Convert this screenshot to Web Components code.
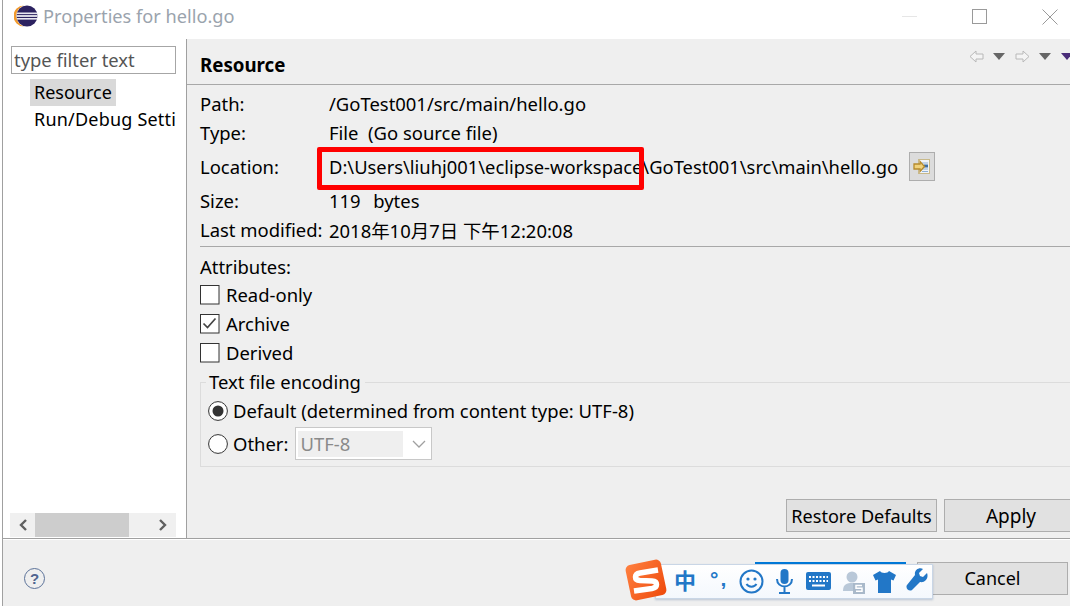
<!DOCTYPE html>
<html lang="en">
<head>
<meta charset="utf-8">
<title>Properties for hello.go</title>
<style>
  html, body { margin: 0; padding: 0; background: #fff; }
  body {
    width: 1070px;
    height: 606px;
    overflow: hidden;
    font-family: "Noto Sans", "Noto Sans CJK SC", sans-serif;
    font-size: 18px;
    color: #000;
  }
</style>
</head>
<body>
<properties-dialog>
  <dialog-titlebar slot="title">Properties for hello.go</dialog-titlebar>
  <pref-sidebar slot="side"></pref-sidebar>
  <resource-page slot="page"></resource-page>
  <dialog-footer slot="footer"></dialog-footer>
</properties-dialog>
<ime-toolbar></ime-toolbar>

<script>
function shadow(el, html) {
  el.attachShadow({ mode: "open" }).innerHTML = html;
}

class PropertiesDialog extends HTMLElement {
  connectedCallback() {
    shadow(this, `
      <style>
        :host { display: flex; flex-direction: column; width: 1067px; height: 606px; margin-left: 2px; border-left: 1px solid #a0a0a0; overflow: hidden; }
        .main { display: flex; height: 499px; border-bottom: 1px solid #a0a0a0; }
        .side { width: 183px; flex: none; background: #fff; border-right: 1px solid #a0a0a0; }
        .page { flex: 1; min-width: 0; background: #efefef; }
        .foot { flex: 1; background: #efefef; border-top: 1px solid #fff; }
      </style>
      <slot name="title"></slot>
      <div class="main">
        <div class="side"><slot name="side"></slot></div>
        <div class="page"><slot name="page"></slot></div>
      </div>
      <div class="foot"><slot name="footer"></slot></div>
    `);
  }
}

class DialogTitlebar extends HTMLElement {
  connectedCallback() {
    shadow(this, `
      <style>
        :host { display: flex; align-items: center; height: 39px; flex: none; background: #fff; padding-left: 11px; }
        svg { display: block; flex: none; }
        .name { margin-left: 5px; color: #9aa3ad; font-size: 18.2px; flex: 1; position: relative; top: -4px; }
        .logo { position: relative; top: -4px; }
        .btns { display: flex; align-items: center; position: relative; top: -3px; }
      </style>
      <svg class="logo" width="24" height="22" viewBox="0 0 24 22">
        <path d="M10 0.5A10.5 10.5 0 0 0 10 21.5A11 11 0 0 1 10 0.5Z" fill="#f29b2e"/>
        <circle cx="13" cy="11" r="10.5" fill="#2c2260"/>
        <rect x="3" y="7.5" width="20" height="1.6" fill="#e8e6f0"/>
        <rect x="2.5" y="10.2" width="21" height="1.6" fill="#fff"/>
        <rect x="3" y="13" width="20" height="1.6" fill="#e8e6f0"/>
      </svg>
      <span class="name"><slot></slot></span>
      <div class="btns">
        <svg width="15" height="2" viewBox="0 0 15 2" style="margin-right:55px"><rect width="15" height="1" fill="#e6e6e6"/></svg>
        <svg width="15" height="15" viewBox="0 0 15 15" style="margin-right:55px"><rect x=".5" y=".5" width="14" height="14" fill="none" stroke="#9a9a9a"/></svg>
        <svg width="16" height="16" viewBox="0 0 16 16" style="margin-right:12px"><path d="M.5.5l15 15M15.5.5l-15 15" fill="none" stroke="#9a9a9a"/></svg>
      </div>
    `);
  }
}

class PrefSidebar extends HTMLElement {
  connectedCallback() {
    shadow(this, `
      <style>
        :host { display: flex; flex-direction: column; height: 100%; padding: 7px 10px 1px 8px; box-sizing: border-box; }
        input { box-sizing: border-box; width: 165px; height: 28px; border: 1px solid #a6a6a6; padding: 0 2px 2px; margin: 0; font: inherit; font-size: 18.4px; flex: none; outline: none; background: #fff; }
        input::placeholder { color: #555; opacity: 1; }
        .tree { flex: 1; margin-top: 5px; width: 165px; overflow: hidden; white-space: nowrap; padding-left: 19px; box-sizing: border-box; }
        .item { height: 27px; line-height: 26px; }
        .item span { display: inline-block; height: 27px; padding: 0 4px 0 4px; margin-right: -60px; }
        .sel span { background: #d9d9d9; }
        .run { letter-spacing: .2px; }
        .scroll { display: flex; align-items: center; flex: none; width: 166px; height: 24px; margin-left: -1px; background: #f0f0f0; }
        .thumb { width: 94px; height: 24px; background: #cdcdcd; margin: 0 auto 0 7px; }
        svg { display: block; flex: none; }
      </style>
      <input type="text" placeholder="type filter text">
      <div class="tree">
        <div class="item sel"><span>Resource</span></div>
        <div class="item run"><span>Run/Debug Settings</span></div>
      </div>
      <div class="scroll">
        <svg style="margin-left:8px" width="10" height="12" viewBox="0 0 10 12"><path d="M8 1L3 6l5 5" fill="none" stroke="#606060" stroke-width="2.4"/></svg>
        <div class="thumb"></div>
        <svg style="margin-right:8px" width="10" height="12" viewBox="0 0 10 12"><path d="M2 1l5 5-5 5" fill="none" stroke="#606060" stroke-width="2.4"/></svg>
      </div>
    `);
  }
}

class InfoRow extends HTMLElement {
  connectedCallback() {
    shadow(this, `
      <style>
        :host { display: flex; align-items: center; white-space: nowrap; }
        .label { width: 129px; flex: none; }
      </style>
      <span class="label">${this.getAttribute("label")}</span><slot></slot>
    `);
  }
}

class CheckRow extends HTMLElement {
  connectedCallback() {
    const mark = this.hasAttribute("checked")
      ? '<path d="M3.5 9.5l4 4 8-9" fill="none" stroke="#444" stroke-width="1.7"/>' : "";
    shadow(this, `
      <style>
        :host { display: flex; align-items: center; height: 29px; gap: 6px; }
        svg { display: block; flex: none; }
      </style>
      <svg width="20" height="20" viewBox="0 0 20 20"><rect x=".5" y=".5" width="18.5" height="18.5" fill="#fff" stroke="#333"/>${mark}</svg>
      <slot></slot>
    `);
  }
}

class RadioRow extends HTMLElement {
  connectedCallback() {
    const dot = this.hasAttribute("checked") ? '<circle cx="10" cy="10" r="5.5" fill="#333"/>' : "";
    shadow(this, `
      <style>
        :host { display: flex; align-items: center; gap: 5px; }
        svg { display: block; flex: none; }
      </style>
      <svg width="20" height="20" viewBox="0 0 20 20"><circle cx="10" cy="10" r="9.4" fill="#fff" stroke="#333"/>${dot}</svg>
      <slot></slot>
    `);
  }
}

class PushButton extends HTMLElement {
  connectedCallback() {
    shadow(this, `
      <style>
        :host { display: flex; align-items: center; justify-content: center; box-sizing: border-box; height: 33px; background: #e1e1e1; border: 1px solid #adadad; white-space: nowrap; flex: none; }
      </style>
      <slot></slot>
    `);
  }
}

class ResourcePage extends HTMLElement {
  connectedCallback() {
    shadow(this, `
      <style>
        :host { display: flex; flex-direction: column; height: 100%; overflow: hidden; font-size: 18.45px; }
        .head { display: flex; align-items: center; height: 46px; flex: none; box-sizing: border-box; padding: 6px 0 0 13px; border-bottom: 1px solid #a8a8a8; }
        .head b { font-size: 18.7px; font-weight: 700; flex: 1; }
        .nav { display: flex; align-items: center; position: relative; top: -8px; width: 101px; }
        .nav svg { display: block; flex: none; }
        .body { flex: 1; padding: 4px 0 0 13px; display: flex; flex-direction: column; min-height: 0; }
        .r1 { height: 29px; }
        .r2 { height: 38px; }
        .r3 { height: 30px; word-spacing: 1.5px; }
        .loc { flex: none; font-size: 18.35px; }
        .browse { width: 26px; height: 29px; margin-left: 11px; background: #dcdcdc; }
        .sep { height: 1px; background: #a8a8a8; margin-top: 2px; flex: none; }
        .attrs { height: 33px; line-height: 40px; flex: none; }
        fieldset { margin: 3px 0 0; padding: 0 0 0 7px; border: 1px solid #dcdcdc; border-right: 0; height: 97px; box-sizing: border-box; flex: none; }
        legend { padding: 0 4px 0 3px; margin-left: -2px; line-height: 24px; }
        radio-row { height: 33px; }
        .combo { display: flex; align-items: center; box-sizing: border-box; width: 137px; height: 33px; margin-left: 2px; background: #fff; border: 1px solid #c8c8c8; padding: 2px; }
        .combo span { display: block; width: 105px; height: 26px; line-height: 25px; background: #efefef; color: #8a8a8a; padding-left: 2px; box-sizing: border-box; }
        .combo svg { margin-left: 9px; display: block; }
        .actions { display: flex; justify-content: flex-end; gap: 7px; margin-top: auto; margin-right: -8px; padding-bottom: 6px; font-size: 18.1px; }
      </style>
      <div class="head">
        <b>Resource</b>
        <div class="nav">
          <svg width="15" height="13" viewBox="0 0 15 13"><path d="M14 4H7V1L1 6.5 7 12V9h7z" fill="#f4f4f4" stroke="#b8b8b8"/></svg>
          <svg style="margin-left:9px" width="12" height="7" viewBox="0 0 12 7"><path d="M0 0h12L6 7z" fill="#666"/></svg>
          <svg style="margin-left:10px" width="15" height="13" viewBox="0 0 15 13"><path d="M1 4h7V1l6 5.500L8 12V9H1z" fill="#f4f4f4" stroke="#b8b8b8"/></svg>
          <svg style="margin-left:9px" width="12" height="7" viewBox="0 0 12 7"><path d="M0 0h12L6 7z" fill="#666"/></svg>
          <svg style="margin-left:10px" width="12" height="7" viewBox="0 0 12 7"><path d="M0 0h12L6 7z" fill="#4a2d7a"/></svg>
        </div>
      </div>
      <div class="body">
        <info-row class="r1" label="Path:">/GoTest001/src/main/hello.go</info-row>
        <info-row class="r1" label="Type:">File&nbsp; (Go source file)</info-row>
        <info-row class="r2" label="Location:">
          <span class="loc">D:\\Users\\liuhj001\\eclipse-workspace\\GoTest001\\src\\main\\hello.go</span>
          <push-button class="browse">
            <svg width="18" height="17" viewBox="0 0 18 17"><rect x="5.500" y="1.500" width="11" height="14" fill="#f1f4f8" stroke="#c8b98a"/><path d="M9 5h6M11 8h4M9 11h6M9 13.500h6" stroke="#8fb0d4"/><rect x="11" y="6.500" width="4" height="3" fill="#3d6fa5"/><path d="M1 6h6V3.500L11.500 8.500 7 13.500V11H1z" fill="#f0d27c" stroke="#b58a2c" stroke-width="1.300"/></svg>
          </push-button>
        </info-row>
        <info-row class="r3" label="Size:">119&nbsp; bytes</info-row>
        <info-row class="r1" label="Last modified:">2018年10月7日 下午12:20:08</info-row>
        <div class="sep"></div>
        <div class="attrs">Attributes:</div>
        <check-row>Read-only</check-row>
        <check-row checked>Archive</check-row>
        <check-row>Derived</check-row>
        <fieldset>
          <legend>Text file encoding</legend>
          <radio-row checked>Default (determined from content type: UTF-8)</radio-row>
          <radio-row>Other:
            <div class="combo"><span>UTF-8</span><svg width="14" height="8" viewBox="0 0 14 8"><path d="M1 1l6 6 6-6" fill="none" stroke="#a0a0a0" stroke-width="1.300"/></svg></div>
          </radio-row>
        </fieldset>
        <div class="actions">
          <push-button style="width:151px">Restore Defaults</push-button>
          <push-button style="width:134px;font-size:19px">Apply</push-button>
        </div>
      </div>
      <red-mark></red-mark>
    `);
  }
}

// reviewer's red box drawn over the location path
class RedMark extends HTMLElement {
  connectedCallback() {
    shadow(this, `
      <style>
        :host { position: absolute; left: 317px; top: 147px; width: 327px; height: 43px; box-sizing: border-box; border: 5px solid #f00; border-radius: 2px; }
      </style>
    `);
  }
}

class DialogFooter extends HTMLElement {
  connectedCallback() {
    shadow(this, `
      <style>
        :host { display: flex; align-items: center; height: 66px; box-sizing: border-box; padding: 10px 2px 0 21px; }
        .help { display: flex; align-items: center; justify-content: center; box-sizing: border-box; width: 21px; height: 21px; border: 1.500px solid #5b7299; border-radius: 50%; color: #4f6590; font: 700 15px "Liberation Sans", sans-serif; }
        .ok { width: 151px; height: 33px; box-sizing: border-box; border-top: 2px solid #0078d7; margin-left: auto; margin-right: 11px; }
        push-button { width: 151px; }
      </style>
      <div class="help">?</div>
      <div class="ok"></div>
      <push-button>Cancel</push-button>
    `);
  }
}

// sogou input method bar floats above the dialog
class ImeToolbar extends HTMLElement {
  connectedCallback() {
    shadow(this, `
      <style>
        :host { position: absolute; left: 625px; top: 559px; width: 308px; height: 42px; }
        .bar { position: absolute; left: 30px; right: 0; top: 5px; height: 35px; box-sizing: border-box; background: linear-gradient(#fff, #f4f8fd); border: 1px solid #c9d6e6; box-shadow: 0 1px 2px rgba(90,120,160,.35); color: #2277c7; }
        .logo { left: 0; top: 0; overflow: visible; }
        .zh { position: absolute; left: 18px; top: 0; font: 700 22px/28px "Noto Sans CJK SC", sans-serif; }
        .pt { position: absolute; left: 54px; top: 0; font: 700 21px/28px "Liberation Sans", sans-serif; letter-spacing: 2px; }
        svg { position: absolute; display: block; }
      </style>
      <div class="bar">
        <span class="zh">中</span>
        <span class="pt">°,</span>
        <svg style="left:83px;top:4px" width="25" height="25" viewBox="0 0 25 25"><circle cx="12.500" cy="12.500" r="11" fill="none" stroke="#2277c7" stroke-width="2"/><circle cx="9" cy="10" r="1.600" fill="#2277c7"/><circle cx="16" cy="10" r="1.600" fill="#2277c7"/><path d="M7.500 15c2 3.500 8 3.500 10 0" fill="none" stroke="#2277c7" stroke-width="2"/></svg>
        <svg style="left:119px;top:4px" width="19" height="25" viewBox="0 0 19 25"><rect x="5.500" y="0" width="8" height="15" rx="4" fill="#2277c7"/><path d="M2 10c0 10 15 10 15 0M9.500 18v5M4 24h11" fill="none" stroke="#2277c7" stroke-width="2"/></svg>
        <svg style="left:150px;top:7px" width="25" height="18" viewBox="0 0 25 18"><rect width="25" height="18" rx="2" fill="#2277c7"/><path d="M3 5h19M3 9h19" stroke="#fff" stroke-width="2" stroke-dasharray="2 1.500"/><path d="M6 13.500h13" stroke="#fff" stroke-width="2"/></svg>
        <svg style="left:186px;top:6px" width="24" height="23" viewBox="0 0 24 23"><circle cx="10" cy="6" r="5.500" fill="#b9c8d8"/><path d="M1 20c0-7 4-8 9-8s8 1 9 6v2z" fill="#b9c8d8"/><rect x="11" y="12" width="12" height="11" fill="#a9b9ca"/><path d="M20 14.500h-6v2.700h6v3h-6" fill="none" stroke="#fff" stroke-width="1.500"/></svg>
        <svg style="left:217px;top:6px" width="23" height="22" viewBox="0 0 23 22"><path d="M7 0c1 2.500 8 2.500 9 0l7 4-2.500 5.500L18 8.500V22H5V8.500L2.500 9.500 0 4z" fill="#2277c7"/></svg>
        <svg style="left:250px;top:3px" width="22" height="23" viewBox="0 0 22 23"><path d="M21 5l-4 4-3-1-1-3 4-4c-4-2-9 1-8 6L1 17c-2 3 2 7 5 5l8-8c5 1 9-4 7-9z" fill="#2277c7"/></svg>
      </div>
      <svg class="logo" width="42" height="42" viewBox="0 0 42 42">
        <defs><linearGradient id="g" x1="0" y1="0" x2="1" y2="1"><stop offset="0" stop-color="#ff8040"/><stop offset="1" stop-color="#ee4a0c"/></linearGradient></defs>
        <rect x="3" y="3" width="36" height="36" rx="5" fill="url(#g)" transform="rotate(-12 21 21)"/>
        <path d="M33 11L15 14c-6 1-6 7 0 7.500l12 .5c6 .5 6 6.500 0 7.500L9 32" fill="none" stroke="#fff" stroke-width="5.500"/>
      </svg>
    `);
  }
}

customElements.define("properties-dialog", PropertiesDialog);
customElements.define("dialog-titlebar", DialogTitlebar);
customElements.define("pref-sidebar", PrefSidebar);
customElements.define("info-row", InfoRow);
customElements.define("check-row", CheckRow);
customElements.define("radio-row", RadioRow);
customElements.define("push-button", PushButton);
customElements.define("resource-page", ResourcePage);
customElements.define("red-mark", RedMark);
customElements.define("dialog-footer", DialogFooter);
customElements.define("ime-toolbar", ImeToolbar);
</script>
</body>
</html>
